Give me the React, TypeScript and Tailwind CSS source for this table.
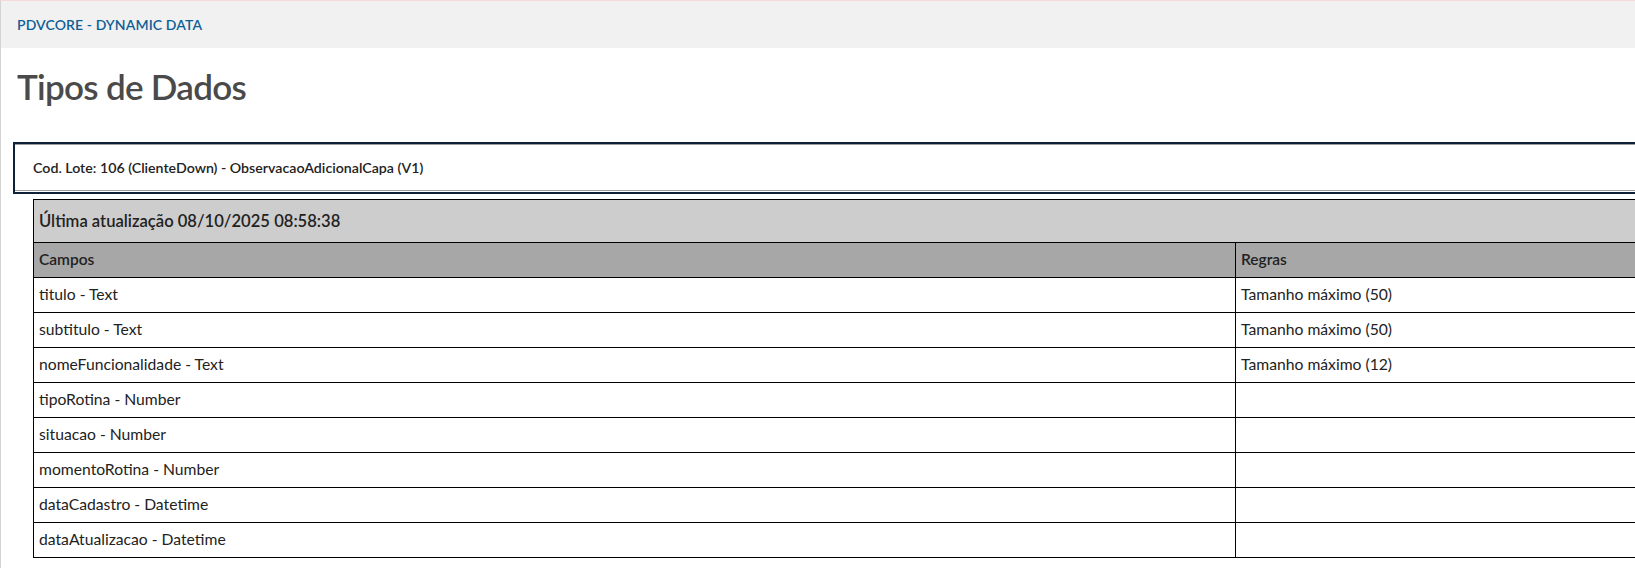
const campos = [
  { campo: "titulo - Text", regra: "Tamanho máximo (50)" },
  { campo: "subtitulo - Text", regra: "Tamanho máximo (50)" },
  { campo: "nomeFuncionalidade - Text", regra: "Tamanho máximo (12)" },
  { campo: "tipoRotina - Number", regra: "" },
  { campo: "situacao - Number", regra: "" },
  { campo: "momentoRotina - Number", regra: "" },
  { campo: "dataCadastro - Datetime", regra: "" },
  { campo: "dataAtualizacao - Datetime", regra: "" },
];

export default function App() {
  return (
    <div className="min-h-screen w-full overflow-hidden border-l border-t border-l-[#d3d3d3] border-t-[#f7dad5] bg-white font-['Lato',sans-serif] text-[#222]">
      <header className="flex h-[47px] items-center bg-[#f1f1f1] px-4">
        <span className="text-[14px] font-semibold tracking-[0.1px] text-[#0f5f96]">
          PDVCORE - DYNAMIC DATA
        </span>
      </header>

      <h1 className="ml-4 mt-[17px] text-[35px] font-semibold leading-[42px] tracking-[-0.7px] text-[#4a4a4a]">
        Tipos de Dados
      </h1>

      <div className="ml-3 mt-[35px] w-[1700px] border-2 border-[#0d2236]">
        <div className="mb-px flex h-[47px] items-center border-y border-[#9c9c9c] pl-[18px] text-[14.2px] font-semibold">
          Cod. Lote: 106 (ClienteDown) - ObservacaoAdicionalCapa (V1)
        </div>
      </div>

      <div className="ml-8 mt-[5px] w-[1700px] border-l border-t border-black">
        <div className="flex h-[43px] items-center border-b border-black bg-[#cdcdcd] px-[5px] text-[16.6px] font-semibold">
          Última atualização 08/10/2025 08:58:38
        </div>
        <div className="grid h-[35px] grid-cols-[1202px_1fr] border-b border-black bg-[#a7a7a7] text-[15.5px] font-semibold">
          <div className="flex items-center border-r border-black px-[5px]">Campos</div>
          <div className="flex items-center px-[5px]">Regras</div>
        </div>
        {campos.map((c) => (
          <div
            key={c.campo}
            className="grid h-[35px] grid-cols-[1202px_1fr] border-b border-black text-[15.7px]"
          >
            <div className="flex items-center border-r border-black px-[5px]">{c.campo}</div>
            <div className="flex items-center px-[5px]">{c.regra}</div>
          </div>
        ))}
      </div>
    </div>
  );
}
